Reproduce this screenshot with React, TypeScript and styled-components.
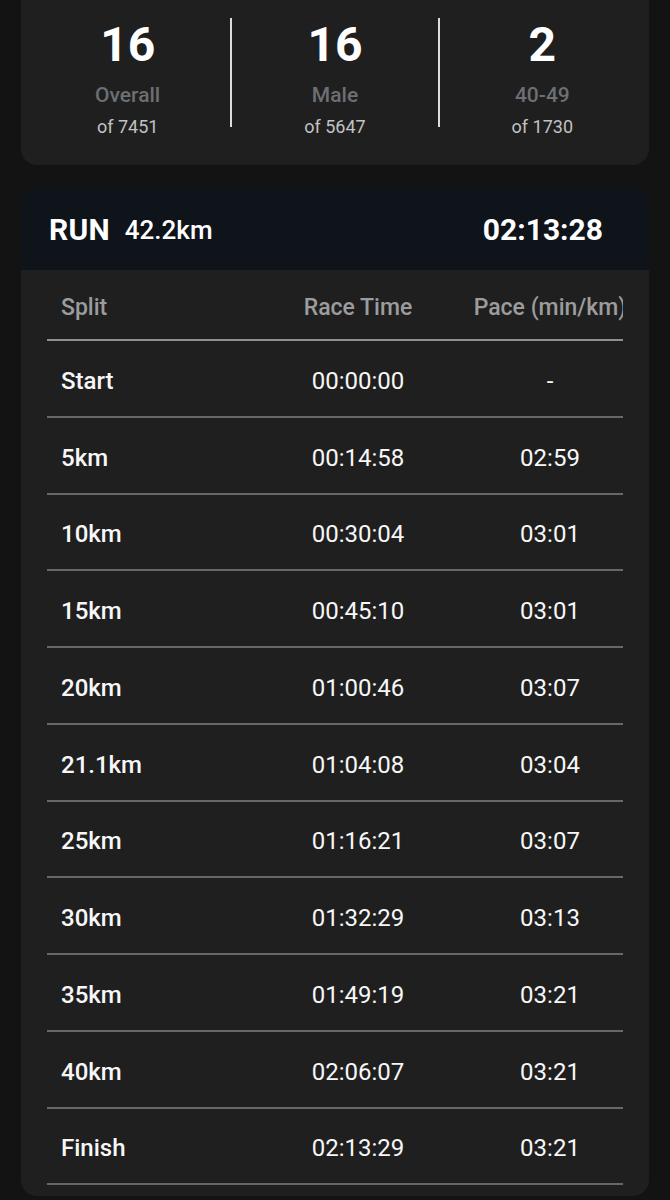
import React from "react";
import styled, { createGlobalStyle } from "styled-components";

const Global = createGlobalStyle`
  html, body { margin: 0; padding: 0; background: #131313; }
  body { font-family: Roboto, "Noto Sans", Arial, sans-serif; color: #fff; overflow: hidden; }
  * { box-sizing: border-box; }
`;

const Page = styled.div`
  padding: 0 21px;
  display: flex;
  flex-direction: column;
  gap: 21px;
`;

const RankCard = styled.section`
  margin-top: -20px;
  background: #1f1f1f;
  border-radius: 16px;
  padding: 37px 4px 26px;
  display: flex;
  align-items: flex-start;
`;

const Stat = styled.div`
  flex: 1;
  display: flex;
  flex-direction: column;
  align-items: center;
`;

const StatNumber = styled.div`
  font-size: 48px;
  line-height: 56px;
  font-weight: 700;
  color: #ffffff;
`;

const StatLabel = styled.div`
  margin-top: 8px;
  font-size: 21px;
  line-height: 28px;
  font-weight: 500;
  color: #6c6f73;
`;

const StatOf = styled.div`
  margin-top: 6px;
  font-size: 18px;
  line-height: 24px;
  font-weight: 400;
  color: #c2c2c2;
`;

const Divider = styled.div`
  width: 2px;
  height: 109px;
  margin-top: 1px;
  background: #dcdcdc;
`;

const SplitCard = styled.section`
  background: #1f1f1f;
  border-radius: 16px;
  overflow: hidden;
  padding-bottom: 11px;
`;

const SplitHeader = styled.header`
  height: 84px;
  background: #0f131a;
  display: flex;
  align-items: center;
  padding: 3px 46px 0 28px;
`;

const Discipline = styled.span`
  font-size: 30px;
  font-weight: 700;
  letter-spacing: 0.2px;
`;

const Distance = styled.span`
  margin-left: 15px;
  font-size: 26px;
  font-weight: 500;
`;

const TotalTime = styled.span`
  margin-left: auto;
  font-size: 30px;
  font-weight: 700;
`;

const TableWrap = styled.div`
  margin: 0 26px;
  overflow: hidden;
`;

const Row = styled.div<{ $head?: boolean }>`
  display: grid;
  grid-template-columns: 200px 222px 162px;
  width: 584px;
  align-items: center;
  padding-top: 5px;
  height: ${(p) => (p.$head ? "71px" : "76.75px")};
  border-bottom: 2px solid ${(p) => (p.$head ? "#8f8f8f" : "#676767")};
`;

const Cell = styled.div<{ $head?: boolean; $first?: boolean }>`
  padding-left: ${(p) => (p.$first ? "14px" : "0")};
  text-align: ${(p) => (p.$first ? "left" : "center")};
  white-space: nowrap;
  font-size: ${(p) => (p.$head ? "23px" : "24px")};
  font-weight: ${(p) => (p.$head || p.$first ? 500 : 400)};
  color: ${(p) => (p.$head ? "#9c9c9c" : "#f7f7f7")};
`;

const stats = [
  { n: "16", label: "Overall", of: "of 7451" },
  { n: "16", label: "Male", of: "of 5647" },
  { n: "2", label: "40-49", of: "of 1730" },
];

const splits: [string, string, string][] = [
  ["Start", "00:00:00", "-"],
  ["5km", "00:14:58", "02:59"],
  ["10km", "00:30:04", "03:01"],
  ["15km", "00:45:10", "03:01"],
  ["20km", "01:00:46", "03:07"],
  ["21.1km", "01:04:08", "03:04"],
  ["25km", "01:16:21", "03:07"],
  ["30km", "01:32:29", "03:13"],
  ["35km", "01:49:19", "03:21"],
  ["40km", "02:06:07", "03:21"],
  ["Finish", "02:13:29", "03:21"],
];

export default function App() {
  return (
    <>
      <Global />
      <Page>
        <RankCard>
          {stats.map((s, i) => (
            <React.Fragment key={i}>
              {i > 0 && <Divider />}
              <Stat>
                <StatNumber>{s.n}</StatNumber>
                <StatLabel>{s.label}</StatLabel>
                <StatOf>{s.of}</StatOf>
              </Stat>
            </React.Fragment>
          ))}
        </RankCard>
        <SplitCard>
          <SplitHeader>
            <Discipline>RUN</Discipline>
            <Distance>42.2km</Distance>
            <TotalTime>02:13:28</TotalTime>
          </SplitHeader>
          <TableWrap>
            <Row $head>
              <Cell $head $first>Split</Cell>
              <Cell $head>Race Time</Cell>
              <Cell $head>Pace (min/km)</Cell>
            </Row>
            {splits.map(([a, b, c]) => (
              <Row key={a}>
                <Cell $first>{a}</Cell>
                <Cell>{b}</Cell>
                <Cell>{c}</Cell>
              </Row>
            ))}
          </TableWrap>
        </SplitCard>
      </Page>
    </>
  );
}
